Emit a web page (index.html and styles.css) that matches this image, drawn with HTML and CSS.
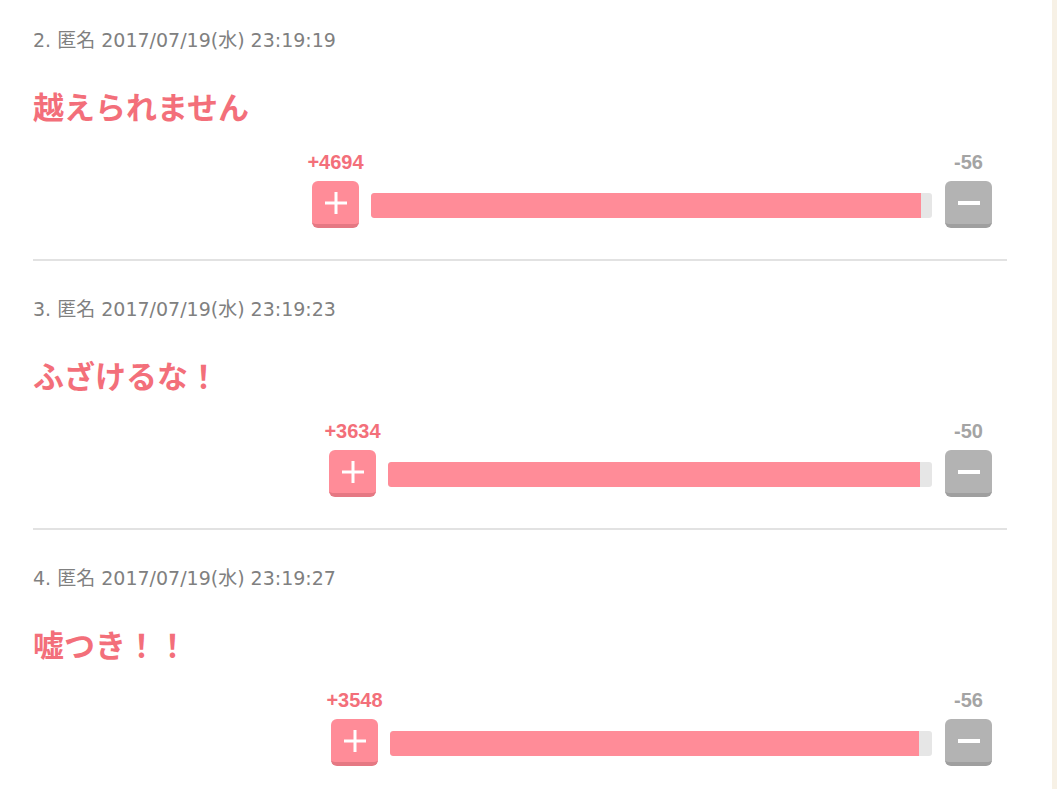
FILE: index.html
```html
<!DOCTYPE html>
<html lang="ja">
<head>
<meta charset="utf-8">
<title>comments</title>
<link rel="stylesheet" href="styles.css">
</head>
<body>
<div class="page">
  <div class="main">
    <div class="post">
      <p class="meta">2. 匿名 2017/07/19(水) 23:19:19</p>
      <p class="body">越えられません</p>
      <div class="vote">
        <div class="vbtn-wrap">
          <span class="count plus-count">+4694</span>
          <span class="vbtn plus"><svg viewBox="0 0 24 24" width="24" height="24"><path d="M12 1v22M1 12h22" stroke="#fff" stroke-width="3" fill="none"/></svg></span>
        </div>
        <div class="bar" style="width:561px"><div class="fill" style="width:550px"></div></div>
        <div class="vbtn-wrap">
          <span class="count minus-count">-56</span>
          <span class="vbtn minus"><svg viewBox="0 0 24 24" width="24" height="24"><path d="M1 12h22" stroke="#fff" stroke-width="4" fill="none"/></svg></span>
        </div>
      </div>
    </div>
    <div class="post">
      <p class="meta">3. 匿名 2017/07/19(水) 23:19:23</p>
      <p class="body">ふざけるな！</p>
      <div class="vote">
        <div class="vbtn-wrap">
          <span class="count plus-count">+3634</span>
          <span class="vbtn plus"><svg viewBox="0 0 24 24" width="24" height="24"><path d="M12 1v22M1 12h22" stroke="#fff" stroke-width="3" fill="none"/></svg></span>
        </div>
        <div class="bar" style="width:544px"><div class="fill" style="width:532px"></div></div>
        <div class="vbtn-wrap">
          <span class="count minus-count">-50</span>
          <span class="vbtn minus"><svg viewBox="0 0 24 24" width="24" height="24"><path d="M1 12h22" stroke="#fff" stroke-width="4" fill="none"/></svg></span>
        </div>
      </div>
    </div>
    <div class="post">
      <p class="meta">4. 匿名 2017/07/19(水) 23:19:27</p>
      <p class="body">嘘つき！！</p>
      <div class="vote">
        <div class="vbtn-wrap">
          <span class="count plus-count">+3548</span>
          <span class="vbtn plus"><svg viewBox="0 0 24 24" width="24" height="24"><path d="M12 1v22M1 12h22" stroke="#fff" stroke-width="3" fill="none"/></svg></span>
        </div>
        <div class="bar" style="width:542px"><div class="fill" style="width:529px"></div></div>
        <div class="vbtn-wrap">
          <span class="count minus-count">-56</span>
          <span class="vbtn minus"><svg viewBox="0 0 24 24" width="24" height="24"><path d="M1 12h22" stroke="#fff" stroke-width="4" fill="none"/></svg></span>
        </div>
      </div>
    </div>
  </div>
</div>
</body>
</html>
```

FILE: styles.css
```css
html, body {
  margin: 0;
  padding: 0;
  background: #f7f1e6;
  height: 100%;
  overflow: hidden;
}
.page {
  width: 1052px;
  min-height: 789px;
  background: #fff;
}
.main {
  padding: 0 50px 0 33px;
  width: 974px;
}
.post {
  padding-top: 36px;
  padding-bottom: 31px;
  border-bottom: 2px solid #e2e2e2;
}
.post:first-child {
  padding-top: 28px;
}
.meta {
  margin: 0;
  font-family: "DejaVu Sans", "Noto Sans CJK JP", sans-serif;
  font-size: 19px;
  line-height: 24px;
  color: #808080;
}
.body {
  margin: 36px 0 0;
  font-family: "Noto Sans CJK JP", sans-serif;
  font-weight: 700;
  font-size: 31px;
  line-height: 36px;
  color: #f36f7a;
}
.vote {
  margin-top: 27px;
  display: flex;
  justify-content: flex-end;
  align-items: flex-end;
  padding-right: 15px;
}
.vbtn-wrap {
  display: flex;
  flex-direction: column;
  align-items: center;
  width: 47px;
}
.count {
  font-family: "Liberation Sans", Arial, sans-serif;
  font-weight: 700;
  font-size: 20px;
  line-height: 22px;
  margin-bottom: 8px;
  white-space: nowrap;
}
.plus-count { color: #f36f7a; }
.minus-count { color: #a4a4a4; }
.vbtn {
  width: 47px;
  height: 47px;
  border-radius: 6px;
  display: flex;
  align-items: center;
  justify-content: center;
  box-sizing: border-box;
}
.plus {
  background: #ff8c98;
  border-bottom: 4px solid #e57883;
}
.minus {
  background: #b3b3b3;
  border-bottom: 4px solid #9f9f9f;
}
.bar {
  height: 25px;
  background: #e6e6e6;
  border-radius: 3px;
  margin: 0 13px 10px 12px;
  overflow: hidden;
}
.fill {
  height: 100%;
  background: #ff8c98;
  border-radius: 3px 0 0 3px;
}
```
